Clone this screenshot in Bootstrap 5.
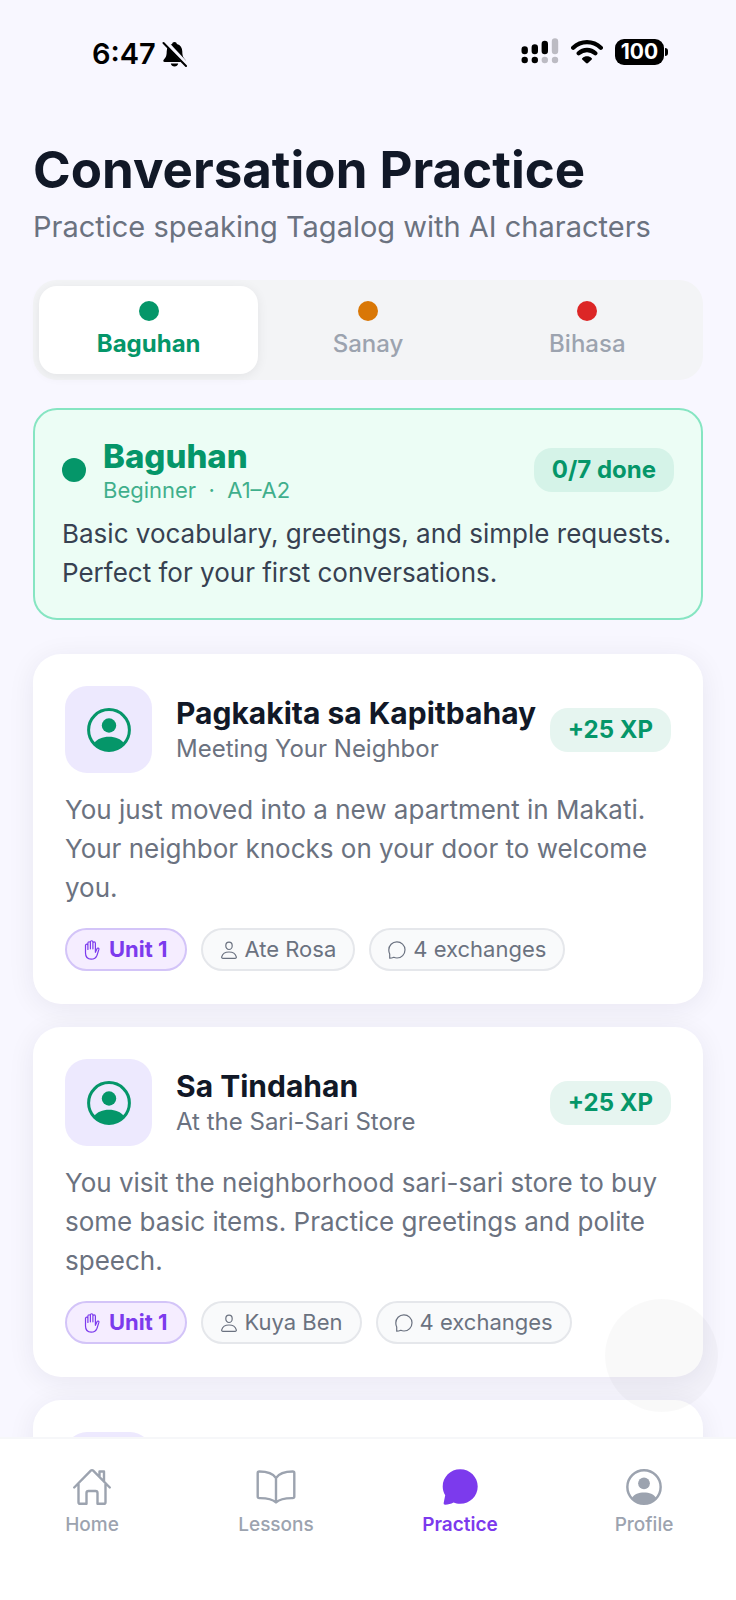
<!DOCTYPE html>
<html lang="en">
<head>
<meta charset="utf-8">
<meta name="viewport" content="width=device-width, initial-scale=1">
<title>Conversation Practice</title>
<link rel="stylesheet" href="https://cdn.jsdelivr.net/npm/bootstrap@5.3.0/dist/css/bootstrap.min.css">
<style>
  body { font-family: Inter, "Liberation Sans", sans-serif; background: #f8f7ff; color: #111827; }
  .app { height: 100vh; }
  .screen { overflow-y: auto; scrollbar-width: none; padding: 0 33px; min-height: 0; }
  .screen::-webkit-scrollbar { display: none; }

  .status { padding: 34px 68px 0 92px; height: 140px; color: #000; }
  .clock { font-size: 29px; line-height: 40px; font-weight: 600; }
  .status-left { gap: 6px; }
  .status-right { gap: 12px; }
  .battery { background: #000; color: #fff; width: 49px; height: 26px; border-radius: 9px; font-size: 21px; line-height: 26px; font-weight: 700; }
  .battery-tip { width: 3px; height: 8px; margin-left: 1px; background: #000; border-radius: 0 4px 4px 0; }

  .page-title { font-size: 51px; line-height: 60px; font-weight: 700; margin-bottom: 7px; }
  .page-sub { font-size: 29px; line-height: 40px; color: #6b7280; margin-bottom: 33px; }

  .levels { background: #f3f4f6; border-radius: 24px; padding: 6px; margin-bottom: 28px; }
  .level-btn { border: 0; background: none; flex: 1 1 0; border-radius: 18px; padding: 15px 0; gap: 8px; font-size: 24px; line-height: 30px; font-weight: 500; color: #9ca3af; }
  .level-btn.active { background: #fff; color: #059669; font-weight: 700; box-shadow: 0 2px 12px rgba(0,0,0,.07); }
  .dot { width: 20px; height: 20px; border-radius: 50%; background: #059669; }
  .dot-amber { background: #d97706; }
  .dot-red { background: #dc2626; }
  .dot-lg { width: 24px; height: 24px; margin-right: 17px; }

  .banner { background: #ecfdf5; border: 2px solid #86e5c2; border-radius: 24px; padding: 26px 27px; margin-bottom: 34px; }
  .banner-title { font-size: 33px; line-height: 40px; font-weight: 800; color: #059669; }
  .banner-sub { font-size: 22px; line-height: 28px; color: #059669; opacity: .75; white-space: pre; }
  .body-text { font-size: 26px; line-height: 39px; }
  .banner .body-text { color: #374151; margin-top: 10px; }
  .pill { border-radius: 18px; padding: 0 18px; line-height: 44px; font-size: 24px; font-weight: 700; color: #059669; background: #e6f5f0; white-space: nowrap; }
  .banner .pill { background: #d5f3e8; }

  .scene { background: #fff; border-radius: 28px; padding: 32px 32px 33px; margin-bottom: 23px; box-shadow: 0 4px 28px rgba(30,20,60,.07); }
  .avatar { width: 87px; height: 87px; border-radius: 22px; background: #ede9fe; color: #059669; margin-right: 24px; }
  .scene-title { font-size: 30px; line-height: 38px; font-weight: 700; }
  .scene-sub { font-size: 24px; line-height: 34px; color: #6b7280; }
  .scene .body-text { color: #6b7280; margin: 17px 0 21px; }
  .chips { gap: 14px; }
  .chip { height: 43px; border: 2px solid #e5e7eb; border-radius: 22px; background: #f9fafb; padding: 0 17px; gap: 7px; font-size: 22px; color: #6b7280; white-space: nowrap; }
  .chip-unit { background: #f5edff; border-color: #d3c4f8; color: #7c3aed; font-weight: 700; gap: 9px; }

  .tabs { background: #fff; border-top: 2px solid #f6f7f9; height: 163px; padding-top: 28px; }
  .tab-link { flex: 1 1 0; color: #9ca3af; text-decoration: none; font-size: 19px; line-height: 24px; font-weight: 500; gap: 6px; }
  .tab-link.active { color: #7c3aed; font-weight: 600; }

  .touch { position: fixed; right: 18px; bottom: 188px; width: 113px; height: 113px; border-radius: 50%; background: rgba(0,0,0,.022); }
</style>
</head>
<body>
<svg width="0" height="0" class="position-absolute" aria-hidden="true">
  <symbol id="i-person-circle" viewBox="0 0 44 44">
    <circle cx="22" cy="22" r="20.400" fill="none" stroke="currentColor" stroke-width="3"/>
    <circle cx="22" cy="17.500" r="7.200" fill="currentColor"/>
    <path d="M7 35.500C10 31 15.500 28.800 22 28.800S34 31 37 35.500C33.500 40 28 42.500 22 42.500S10.500 40 7 35.500Z" fill="currentColor"/>
  </symbol>
  <symbol id="i-hand" viewBox="0 0 16 20">
    <path d="M1.500 11V5.400a1.200 1.200 0 0 1 2.400 0V9.500M3.900 9V3a1.250 1.250 0 0 1 2.500 0V8.800M6.400 8.500V2a1.250 1.250 0 0 1 2.500 0V8.800M8.900 8.500V3.200a1.250 1.250 0 0 1 2.500 0V12.300L13 8.700c.6-1.200 2.300-.7 1.900.7L13 15.200C12 18 10 19.200 7.200 19.200 3.500 19.200 1.500 16.500 1.500 13V10" fill="none" stroke="currentColor" stroke-width="1.200" stroke-linecap="round" stroke-linejoin="round"/>
  </symbol>
  <symbol id="i-person" viewBox="0 0 18 20">
    <path d="M9 2.200c2 0 3.200 1.500 3.200 3.500S10.800 9.500 9 9.500 5.800 7.700 5.800 5.700 7 2.200 9 2.200ZM9 12c3.600 0 6.500 1.900 7.300 4.800.2.900-.3 1.500-1.200 1.500H2.900c-.9 0-1.400-.6-1.200-1.500C2.500 13.900 5.400 12 9 12Z" fill="none" stroke="currentColor" stroke-width="1.200"/>
  </symbol>
  <symbol id="i-chat" viewBox="0 0 18 20">
    <path d="M1.700 18.200V14C1 12.600.8 11.300.8 10a8.100 8.100 0 1 1 8.200 8c-1.200 0-2.200-.2-3.200-.7-1.200.5-2.600.9-4.100.9Z" fill="none" stroke="currentColor" stroke-width="1.200" stroke-linejoin="round"/>
  </symbol>
</svg>

<div class="app d-flex flex-column">
  <header class="status d-flex justify-content-between align-items-start flex-shrink-0">
    <div class="status-left d-flex align-items-center">
      <span class="clock">6:47</span>
      <svg width="25" height="26" viewBox="0 0 25 26" aria-label="Silent">
        <path d="M12.500 1c1.400 0 2.200.8 2.400 2 3.600 1 5.400 4 5.400 7.500 0 4.800 1.200 6.200 3 8.200.8 1 .4 2.300-1 2.300H2.700c-1.400 0-1.800-1.300-1-2.300 1.800-2 3-3.400 3-8.200 0-3.500 1.800-6.500 5.400-7.500.2-1.200 1-2 2.400-2ZM8.800 22.500h7.400c-.3 1.800-1.800 3-3.700 3s-3.400-1.200-3.700-3Z"/>
        <path d="M3 .5 25.500 24.500" stroke="#f8f7ff" stroke-width="4.500"/>
        <path d="M1.500 2 24 25" stroke="#000" stroke-width="2" stroke-linecap="round"/>
      </svg>
    </div>
    <div class="status-right d-flex align-items-center pt-1">
      <svg width="38" height="27" viewBox="0 0 38 27" aria-label="Signal" stroke-width="6.400" stroke-linecap="round">
        <path d="M3.700 11.500v1.500M3.700 21.900v.2M13.800 9.500v3.500M13.800 21.900v.2M23.800 6v7" stroke="#000"/>
        <path d="M34 3.500v9.500M23.800 21.900v.2M34 21.900v.2" stroke="#bcbbc3"/>
      </svg>
      <svg width="32" height="25" viewBox="0 0 32 25" aria-label="Wi-Fi">
        <path d="M2.200 8.700C10 1.200 22 1.200 29.800 8.700M7.700 14.300c4.700-4.400 11.900-4.400 16.600 0" fill="none" stroke="#000" stroke-width="4.300" stroke-linecap="round"/>
        <path d="M11.300 19.200c2.600-2.500 6.800-2.500 9.400 0 .5.500.4 1 0 1.400L17 24c-.7.600-1.300.6-2 0l-3.700-3.400c-.4-.4-.5-.9 0-1.400Z"/>
      </svg>
      <div class="d-flex align-items-center">
        <span class="battery text-center">100</span>
        <span class="battery-tip"></span>
      </div>
    </div>
  </header>

  <main class="screen flex-grow-1">
    <h1 class="page-title">Conversation Practice</h1>
    <p class="page-sub">Practice speaking Tagalog with AI characters</p>

    <div class="levels d-flex" role="group" aria-label="Level">
      <button type="button" class="level-btn active d-flex flex-column align-items-center"><span class="dot"></span>Baguhan</button>
      <button type="button" class="level-btn d-flex flex-column align-items-center"><span class="dot dot-amber"></span>Sanay</button>
      <button type="button" class="level-btn d-flex flex-column align-items-center"><span class="dot dot-red"></span>Bihasa</button>
    </div>

    <section class="banner">
      <div class="d-flex align-items-center">
        <span class="dot dot-lg"></span>
        <div class="flex-grow-1">
          <h2 class="banner-title mb-0">Baguhan</h2>
          <div class="banner-sub">Beginner  ·  A1–A2</div>
        </div>
        <span class="pill">0/7 done</span>
      </div>
      <p class="body-text mb-0">Basic vocabulary, greetings, and simple requests. Perfect for your first conversations.</p>
    </section>

    <article class="scene">
      <div class="d-flex align-items-center">
        <div class="avatar d-flex align-items-center justify-content-center flex-shrink-0"><svg width="44" height="44"><use href="#i-person-circle"/></svg></div>
        <div class="flex-grow-1">
          <h3 class="scene-title mb-0">Pagkakita sa Kapitbahay</h3>
          <div class="scene-sub">Meeting Your Neighbor</div>
        </div>
        <span class="pill">+25 XP</span>
      </div>
      <p class="body-text">You just moved into a new apartment in Makati. Your neighbor knocks on your door to welcome you.</p>
      <div class="d-flex chips">
        <span class="chip chip-unit d-flex align-items-center"><svg width="16" height="20"><use href="#i-hand"/></svg>Unit 1</span>
        <span class="chip d-flex align-items-center"><svg width="18" height="20"><use href="#i-person"/></svg>Ate Rosa</span>
        <span class="chip d-flex align-items-center"><svg width="18" height="20"><use href="#i-chat"/></svg>4 exchanges</span>
      </div>
    </article>

    <article class="scene">
      <div class="d-flex align-items-center">
        <div class="avatar d-flex align-items-center justify-content-center flex-shrink-0"><svg width="44" height="44"><use href="#i-person-circle"/></svg></div>
        <div class="flex-grow-1">
          <h3 class="scene-title mb-0">Sa Tindahan</h3>
          <div class="scene-sub">At the Sari-Sari Store</div>
        </div>
        <span class="pill">+25 XP</span>
      </div>
      <p class="body-text">You visit the neighborhood sari-sari store to buy some basic items. Practice greetings and polite speech.</p>
      <div class="d-flex chips">
        <span class="chip chip-unit d-flex align-items-center"><svg width="16" height="20"><use href="#i-hand"/></svg>Unit 1</span>
        <span class="chip d-flex align-items-center"><svg width="18" height="20"><use href="#i-person"/></svg>Kuya Ben</span>
        <span class="chip d-flex align-items-center"><svg width="18" height="20"><use href="#i-chat"/></svg>4 exchanges</span>
      </div>
    </article>

    <article class="scene">
      <div class="avatar"></div>
    </article>
  </main>

  <nav class="tabs d-flex align-items-start flex-shrink-0" aria-label="Main">
    <a href="#" class="tab-link d-flex flex-column align-items-center">
      <svg width="40" height="40" viewBox="0 0 40 40" fill="none" stroke="currentColor" stroke-width="2.400" stroke-linecap="round" stroke-linejoin="round"><path d="M2.200 20.500 18.800 3.700c.7-.7 1.700-.7 2.400 0L37.800 20.500M6.500 17v18.200c0 1 .6 1.600 1.600 1.600h6.400V26c0-1.200.8-2 2-2h7c1.200 0 2 .8 2 2v10.800h6.400c1 0 1.600-.6 1.600-1.600V17M27.500 9.500V4.500h4.500v9.500"/></svg>
      Home
    </a>
    <a href="#" class="tab-link d-flex flex-column align-items-center">
      <svg width="40" height="40" viewBox="0 0 40 40" fill="none" stroke="currentColor" stroke-width="2.400" stroke-linecap="round" stroke-linejoin="round"><path d="M20 11C17 6.500 11 4.500 3.300 4.500c-.9 0-1.600.6-1.600 1.600v23.400c0 1 .7 1.600 1.600 1.600C12 31 16.500 32 20 35.500 23.500 32 28 31 36.700 31.100c.9 0 1.600-.6 1.600-1.600V6.100c0-1-.7-1.600-1.600-1.600C29 4.500 23 6.500 20 11ZM20 11v24"/></svg>
      Lessons
    </a>
    <a href="#" class="tab-link active d-flex flex-column align-items-center">
      <svg width="40" height="40" viewBox="0 0 40 40" fill="currentColor"><path d="M20.200 2.200c9.800 0 17.500 7.800 17.500 17.300S30 36.800 20.200 36.800c-2.600 0-4.700-.4-6.700-1.300-2.500 1.300-5.300 2.200-8.300 2.200-1.200 0-1.800-.9-1.500-2l1.500-7.500C3.600 25.700 2.700 22.700 2.700 19.500 2.700 10 10.400 2.200 20.200 2.200Z"/></svg>
      Practice
    </a>
    <a href="#" class="tab-link d-flex flex-column align-items-center">
      <svg width="40" height="40" viewBox="-2.500 -2.500 49 49"><use href="#i-person-circle" width="44" height="44"/></svg>
      Profile
    </a>
  </nav>
</div>
<div class="touch"></div>
<script src="https://cdn.jsdelivr.net/npm/bootstrap@5.3.0/dist/js/bootstrap.bundle.min.js"></script>
</body>
</html>
